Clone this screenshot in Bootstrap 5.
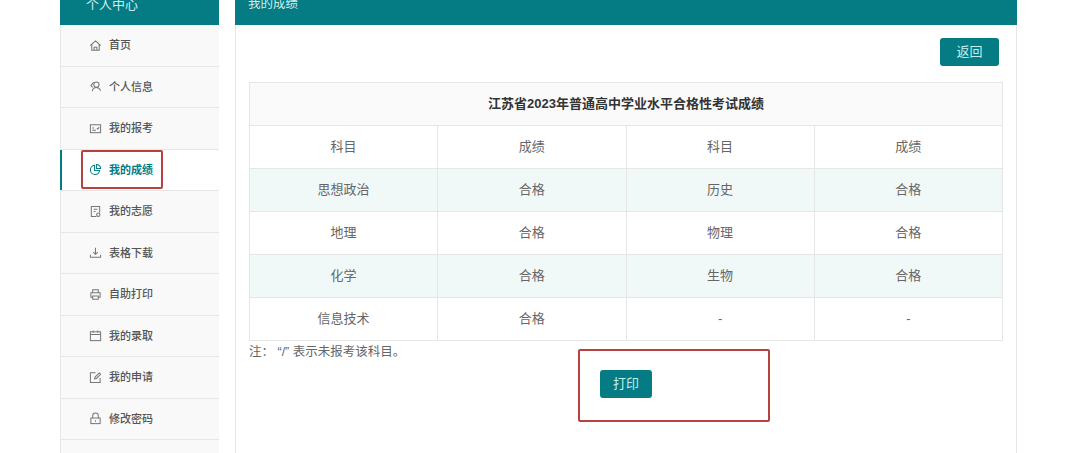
<!DOCTYPE html>
<html lang="zh-CN">
<head>
  <meta charset="UTF-8">
  <title>我的成绩</title>
  <meta name="viewport" content="width=device-width, initial-scale=1">
  <link href="https://cdn.jsdelivr.net/npm/bootstrap@5.3.0/dist/css/bootstrap.min.css" rel="stylesheet">
  <style>
    html, body { height: 453px; overflow: hidden; }
    body { background: #fff; font-family: "Liberation Sans", "Noto Sans CJK SC", sans-serif; color: #666; font-size: 13px; }
    .page-wrap { width: 957px; margin: -16px 0 0 60px; gap: 16px; }
    .side-col { width: 159px; flex: none; }
    .main-col { width: 782px; flex: none; border-right: 1px solid #e6e6e6; border-left: 1px solid #e6e6e6; height: 480px; }
    .teal-head { height: 41px; background: #057b84; color: #cfeeee; line-height: 41px; font-size: 13px; }
    .side-col .teal-head { padding-left: 26px; }
    .main-col .teal-head { margin: 0 -1px; padding-left: 13px; font-size: 12.5px; }
    .side-menu { background: #f9f9f9; border-left: 1px solid #e6e6e6; height: 480px; }
    .side-item { height: 41.5px; padding-left: 28px; gap: 7px; border-bottom: 1px solid #e6e6e6; font-size: 11px; color: #555; font-weight: 500; }
    .side-item svg { width: 13px; height: 13px; fill: none; stroke: #777; stroke-width: 1.1; flex: none; }
    .side-item.on { background: #fff; color: #057b84; font-weight: 700; box-shadow: inset 2px 0 0 #057b84; margin-left: -1px; padding-left: 29px; }
    .side-item.on svg { stroke: #057b84; }
    .btn-teal { background: #057b84; color: #bff0ee; border: 0; border-radius: 3px; font-size: 13px; padding: 0; height: 28px; line-height: 28px; }
    .btn-teal:hover { background: #057b84; color: #bff0ee; }
    .btn-back { width: 59px; }
    .btn-print { width: 52px; }
    .top-bar { padding: 13px 17px 16px 0; }
    .grade-box { margin: 0 13px; }
    .grade-table { width: 754px; table-layout: fixed; margin-bottom: 0; border-color: #e6e6e6; color: #666; }
    .grade-table td, .grade-table th { height: 43px; padding: 0; text-align: center; vertical-align: middle; font-size: 13px; color: #666; background: transparent; box-shadow: none; }
    .grade-table th { background: #fafafa; color: #333; font-weight: 700; }
    .grade-table .tint td { background: #f1f8f8; }
    .note-line { font-size: 12.5px; line-height: 18px; margin-top: 2px; color: #666; }
    .print-bar { margin-top: 9px; padding-left: 351px; }
    .red-mark { position: absolute; border: 2px solid #b8423f; border-radius: 2px; pointer-events: none; }
    .mark-a { left: 81px; top: 150px; width: 82px; height: 39px; }
    .mark-b { left: 578px; top: 349px; width: 192px; height: 73px; }
  </style>
</head>
<body>
  <div class="page-wrap d-flex">
    <div class="side-col">
      <div class="teal-head">个人中心</div>
      <div class="side-menu">
        <div class="side-item d-flex align-items-center">
          <svg viewBox="0 0 14 14"><path d="M1.5 7 7 2l5.500 5M3 6v6h8V6M5.500 12V9h3v3"/></svg>首页
        </div>
        <div class="side-item d-flex align-items-center">
          <svg viewBox="0 0 14 14"><circle cx="8" cy="5" r="2.800"/><path d="M3.500 12c.5-2.500 2-4 4.500-4s3.500 1 4.500 3.500M5 2.500 2 6l2 2"/></svg>个人信息
        </div>
        <div class="side-item d-flex align-items-center">
          <svg viewBox="0 0 14 14"><rect x="1.500" y="3" width="11" height="8.500"/><path d="M3.500 6.500h2M3.500 9h4M8.500 6.500l1 1 1.500-2"/></svg>我的报考
        </div>
        <div class="side-item on d-flex align-items-center">
          <svg viewBox="0 0 14 14"><path d="M6 2.500a5 5 0 1 0 5.500 5.500H6zM8 1.500V6h4.500A4.500 4.500 0 0 0 8 1.500z"/></svg>我的成绩
        </div>
        <div class="side-item d-flex align-items-center">
          <svg viewBox="0 0 14 14"><path d="M8 12.500H2.500v-11h9V8M5 4.500h4M5 7h2"/><circle cx="10" cy="10.500" r="1.800"/></svg>我的志愿
        </div>
        <div class="side-item d-flex align-items-center">
          <svg viewBox="0 0 14 14"><path d="M7 2v7M4.500 6.500 7 9l2.500-2.500M1.500 9.500v2.500h11V9.500"/></svg>表格下载
        </div>
        <div class="side-item d-flex align-items-center">
          <svg viewBox="0 0 14 14"><path d="M4 5V2h6v3M4 10H2V5h10v5h-2M4 8.500h6v3.500H4z"/></svg>自助打印
        </div>
        <div class="side-item d-flex align-items-center">
          <svg viewBox="0 0 14 14"><rect x="1.500" y="3" width="11" height="9.500"/><path d="M1.500 6h11M4.500 1.500V4M9.500 1.500V4"/></svg>我的录取
        </div>
        <div class="side-item d-flex align-items-center">
          <svg viewBox="0 0 14 14"><path d="M7 2H1.500v10.500h10.500V7.500M6 8.500l.5-2L11 2l1.500 1.500L8 8z"/></svg>我的申请
        </div>
        <div class="side-item d-flex align-items-center">
          <svg viewBox="0 0 14 14"><rect x="2" y="6.500" width="10" height="6"/><path d="M4 6.500V4a3 3 0 0 1 6 0v2.500M7 9v1.500"/></svg>修改密码
        </div>
      </div>
    </div>
    <div class="main-col">
      <div class="teal-head">我的成绩</div>
      <div class="top-bar d-flex justify-content-end">
        <button type="button" class="btn btn-teal btn-back">返回</button>
      </div>
      <div class="grade-box">
        <table class="table table-bordered grade-table">
          <thead>
            <tr><th colspan="4">江苏省2023年普通高中学业水平合格性考试成绩</th></tr>
          </thead>
          <tbody>
            <tr><td>科目</td><td>成绩</td><td>科目</td><td>成绩</td></tr>
            <tr class="tint"><td>思想政治</td><td>合格</td><td>历史</td><td>合格</td></tr>
            <tr><td>地理</td><td>合格</td><td>物理</td><td>合格</td></tr>
            <tr class="tint"><td>化学</td><td>合格</td><td>生物</td><td>合格</td></tr>
            <tr><td>信息技术</td><td>合格</td><td>-</td><td>-</td></tr>
          </tbody>
        </table>
        <div class="note-line">注： “/” 表示未报考该科目。</div>
        <div class="print-bar">
          <button type="button" class="btn btn-teal btn-print">打印</button>
        </div>
      </div>
    </div>
  </div>
  <div class="red-mark mark-a"></div>
  <div class="red-mark mark-b"></div>
</body>
</html>
